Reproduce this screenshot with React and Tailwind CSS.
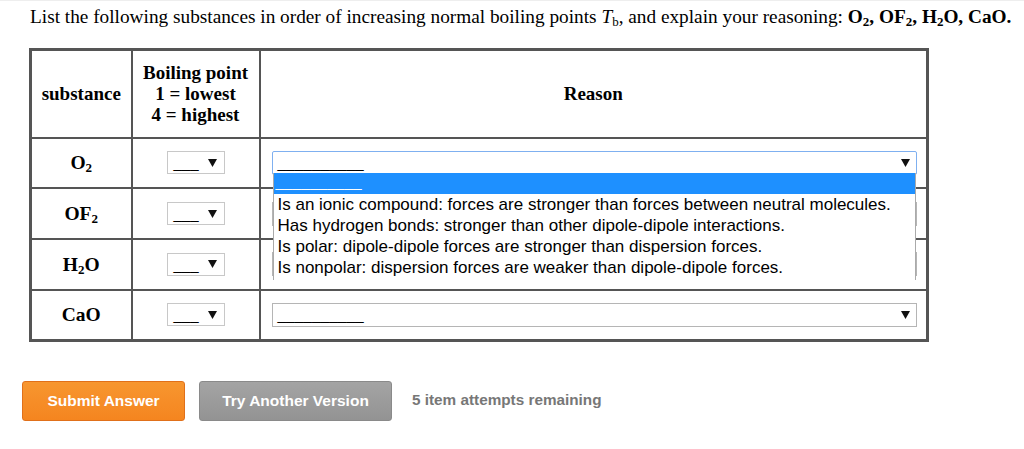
import React from 'react';

const serif = { fontFamily: '"Liberation Serif", "Times New Roman", serif' };
const sans = { fontFamily: '"Liberation Sans", Arial, sans-serif' };

const Arrow = () => (
  <svg width="9" height="8" viewBox="0 0 9 8" className="shrink-0"><path d="M0 0h9L4.5 8z" fill="#111" /></svg>
);

const SmallSelect = () => (
  <div className="mx-auto w-[58px] h-[23px] border border-[#c8c8c8] bg-white flex items-center justify-between pl-[6px] pr-[7px]" style={sans}>
    <span className="text-[15px] leading-none text-black">___</span>
    <Arrow />
  </div>
);

const ReasonSelect = ({ focused }) => (
  <div className={`w-[645px] h-[24px] bg-white flex items-center justify-between pl-[5px] pr-[6px] ${focused ? 'border border-[#7fb0f0] rounded-[2px]' : 'border border-[#b5b5b5]'}`} style={sans}>
    <span className="text-[15.5px] leading-none text-black">__________</span>
    <Arrow />
  </div>
);

const options = [
  'Is an ionic compound: forces are stronger than forces between neutral molecules.',
  'Has hydrogen bonds: stronger than other dipole-dipole interactions.',
  'Is polar: dipole-dipole forces are stronger than dispersion forces.',
  'Is nonpolar: dispersion forces are weaker than dipole-dipole forces.',
];

const sub = 'text-[13px]';

const rows = [
  { id: 'o2', label: <>O<sub className={sub}>2</sub></>, open: true },
  { id: 'of2', label: <>OF<sub className={sub}>2</sub></> },
  { id: 'h2o', label: <>H<sub className={sub}>2</sub>O</> },
  { id: 'cao', label: <>CaO</> },
];

export default function App() {
  return (
    <div className="w-[1024px] h-[449px] bg-white relative border-t border-[#eee]" style={serif}>
      <div className="pl-[30px] pt-[3px] text-[19.3px] leading-[25px] text-black whitespace-nowrap">
        List the following substances in order of increasing normal boiling points <i>T</i><sub className={sub}>b</sub>, and explain your reasoning: <b>O<sub className={sub}>2</sub>, OF<sub className={sub}>2</sub>, H<sub className={sub}>2</sub>O, CaO.</b>
      </div>

      <table className="ml-[29px] mt-[19px] border-collapse border-[3px] border-[#555]">
        <thead>
          <tr className="h-[88px]">
            <th className="w-[101px] border-2 border-[#555] text-[19px] font-bold leading-[21px]">substance</th>
            <th className="w-[128px] border-2 border-[#555] text-[19px] font-bold leading-[21px]">Boiling point<br />1 = lowest<br />4 = highest</th>
            <th className="w-[668px] border-2 border-[#555] text-[19px] font-bold">Reason</th>
          </tr>
        </thead>
        <tbody>
          {rows.map((r) => (
            <tr key={r.id} className="h-[50.7px]">
              <td className="border-2 border-[#555] text-center text-[19.5px] font-bold">{r.label}</td>
              <td className="border-2 border-[#555]"><SmallSelect /></td>
              <td className="border-2 border-[#555] pl-[11px] relative">
                <ReasonSelect focused={r.open} />
                {r.open && (
                  <div className="absolute left-[12px] top-[34px] w-[643px] h-[107px] z-10 bg-white border-l border-r border-[#aaa]" style={sans}>
                    <div className="h-[21px] bg-[#1e90ff] text-white text-[15.5px] leading-[18px] pl-[2px]">__________</div>
                    {options.map((o) => (
                      <div key={o} className="text-[17px] leading-[21px] text-black pl-[4px] whitespace-nowrap">{o}</div>
                    ))}
                  </div>
                )}
              </td>
            </tr>
          ))}
        </tbody>
      </table>

      <div className="flex items-center ml-[22px] mt-[39px] gap-[14px]" style={sans}>
        <button className="w-[163px] h-[40px] rounded-[3px] border border-[#e0701a] bg-gradient-to-b from-[#f7962f] to-[#f5851f] text-white font-bold text-[15.5px]">Submit Answer</button>
        <button className="w-[193px] h-[40px] rounded-[3px] border border-[#8a8a8a] bg-gradient-to-b from-[#a4a4a4] to-[#939393] text-white font-bold text-[15.5px]">Try Another Version</button>
        <span className="ml-[6px] text-[15.3px] font-bold text-[#777]">5 item attempts remaining</span>
      </div>
    </div>
  );
}
